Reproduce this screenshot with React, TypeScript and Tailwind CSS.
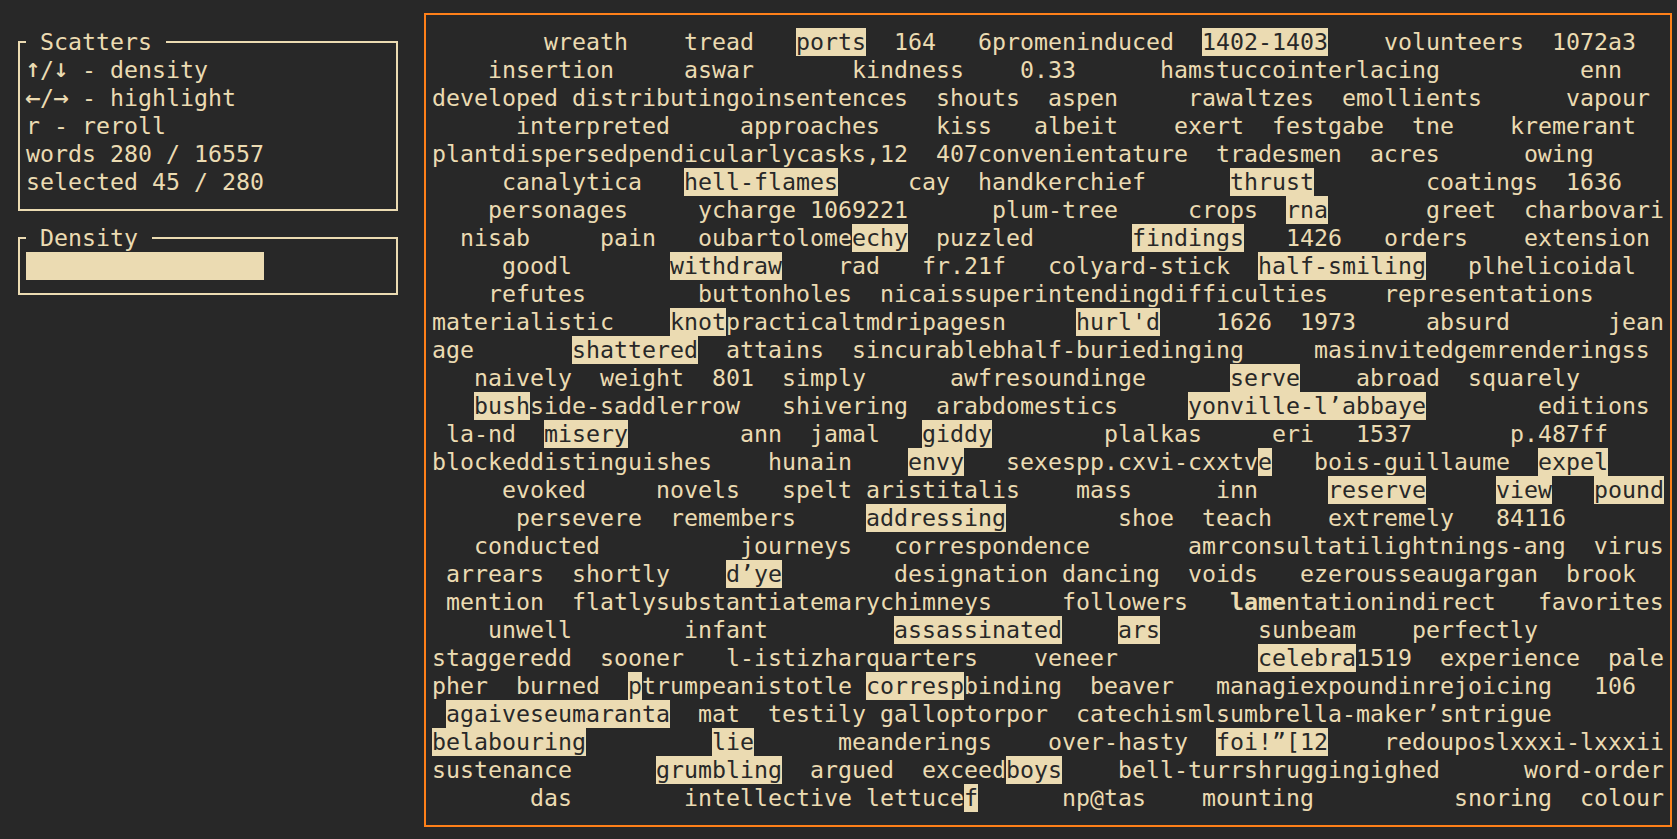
import React from "react";

type Seg = [number, string, string?];

const ROWS: Seg[][] = [
  [[8, "wreath"], [18, "tread"], [26, "ports", "h"], [33, "164"], [39, "6promeninduced"], [55, "1402-1403", "h"], [68, "volunteers"], [80, "1072a3"]],
  [[4, "insertion"], [18, "aswar"], [30, "kindness"], [42, "0.33"], [52, "hamstuccointerlacing"], [82, "enn"]],
  [[0, "developed"], [10, "distributingoinsentences"], [36, "shouts"], [44, "aspen"], [54, "rawaltzes"], [65, "emollients"], [81, "vapour"]],
  [[6, "interpreted"], [22, "approaches"], [36, "kiss"], [43, "albeit"], [53, "exert"], [60, "festgabe"], [70, "tne"], [77, "kremerant"]],
  [[0, "plantdispersedpendicularlycasks,12"], [36, "407convenientature"], [56, "tradesmen"], [67, "acres"], [78, "owing"]],
  [[5, "canalytica"], [18, "hell-flames", "h"], [34, "cay"], [39, "handkerchief"], [57, "thrust", "h"], [71, "coatings"], [81, "1636"]],
  [[4, "personages"], [19, "ycharge"], [27, "1069221"], [40, "plum-tree"], [54, "crops"], [61, "rna", "h"], [71, "greet"], [78, "charbovari"]],
  [[2, "nisab"], [12, "pain"], [19, "oubartolome"], [30, "echy", "h"], [36, "puzzled"], [50, "findings", "h"], [61, "1426"], [68, "orders"], [78, "extension"]],
  [[5, "goodl"], [17, "withdraw", "h"], [29, "rad"], [35, "fr.21f"], [44, "colyard-stick"], [59, "half-smiling", "h"], [74, "plhelicoidal"]],
  [[4, "refutes"], [19, "buttonholes"], [32, "nicaissuperintendingdifficulties"], [68, "representations"]],
  [[0, "materialistic"], [17, "knot", "h"], [21, "practicaltmdripagesn"], [46, "hurl'd", "h"], [56, "1626"], [62, "1973"], [71, "absurd"], [84, "jean"]],
  [[0, "age"], [10, "shattered", "h"], [21, "attains"], [30, "sincurablebhalf-buriedinging"], [63, "masinvitedgemrenderingss"]],
  [[3, "naively"], [12, "weight"], [20, "801"], [25, "simply"], [37, "awfresoundinge"], [57, "serve", "h"], [66, "abroad"], [74, "squarely"]],
  [[3, "bush", "h"], [7, "side-saddlerrow"], [25, "shivering"], [36, "arabdomestics"], [54, "yonville-l\u2019abbaye", "h"], [79, "editions"]],
  [[1, "la-nd"], [8, "misery", "h"], [22, "ann"], [27, "jamal"], [35, "giddy", "h"], [48, "plalkas"], [60, "eri"], [66, "1537"], [77, "p.487ff"]],
  [[0, "blockeddistinguishes"], [24, "hunain"], [34, "envy", "h"], [41, "sexespp.cxvi-cxxtv"], [59, "e", "h"], [63, "bois-guillaume"], [79, "expel", "h"]],
  [[5, "evoked"], [16, "novels"], [25, "spelt"], [31, "aristitalis"], [46, "mass"], [56, "inn"], [64, "reserve", "h"], [76, "view", "h"], [83, "pound", "h"]],
  [[6, "persevere"], [17, "remembers"], [31, "addressing", "h"], [49, "shoe"], [55, "teach"], [64, "extremely"], [76, "84116"]],
  [[3, "conducted"], [22, "journeys"], [33, "correspondence"], [54, "amrconsultatilightnings-ang"], [83, "virus"]],
  [[1, "arrears"], [10, "shortly"], [21, "d\u2019ye", "h"], [33, "designation"], [45, "dancing"], [54, "voids"], [62, "ezerousseaugargan"], [81, "brook"]],
  [[1, "mention"], [10, "flatlysubstantiatemarychimneys"], [45, "followers"], [57, "lame", "b"], [61, "ntationindirect"], [79, "favorites"]],
  [[4, "unwell"], [18, "infant"], [33, "assassinated", "h"], [49, "ars", "h"], [59, "sunbeam"], [70, "perfectly"]],
  [[0, "staggeredd"], [12, "sooner"], [21, "l-istizharquarters"], [43, "veneer"], [59, "celebra", "h"], [66, "1519"], [72, "experience"], [84, "pale"]],
  [[0, "pher"], [6, "burned"], [14, "p", "h"], [15, "trumpeanistotle"], [31, "corresp", "h"], [38, "binding"], [47, "beaver"], [56, "managiexpoundinrejoicing"], [83, "106"]],
  [[1, "agaiveseumaranta", "h"], [19, "mat"], [24, "testily"], [32, "galloptorpor"], [46, "catechismlsumbrella-maker\u2019sntrigue"]],
  [[0, "belabouring", "h"], [20, "lie", "h"], [29, "meanderings"], [44, "over-hasty"], [56, "foi!\u201d[12", "h"], [68, "redouposlxxxi-lxxxii"]],
  [[0, "sustenance"], [16, "grumbling", "h"], [27, "argued"], [35, "exceed"], [41, "boys", "h"], [49, "bell-turrshruggingighed"], [78, "word-order"]],
  [[7, "das"], [18, "intellective"], [31, "lettuce"], [38, "f", "h"], [45, "np@tas"], [55, "mounting"], [73, "snoring"], [82, "colour"]],
];

function Row({ segs }: { segs: Seg[] }) {
  const nodes: React.ReactNode[] = [];
  let cur = 0;
  segs.forEach(([col, text, flag], i) => {
    if (col > cur) {
      nodes.push(
        <span key={"s" + i} className="whitespace-pre">
          {" ".repeat(col - cur)}
        </span>
      );
    }
    if (flag === "h") {
      nodes.push(
        <span key={"t" + i} className="whitespace-pre bg-[#ebdbb2] text-[#282828]">
          {text}
        </span>
      );
    } else if (flag === "b") {
      nodes.push(
        <span key={"t" + i} className="whitespace-pre font-bold">
          {text}
        </span>
      );
    } else {
      nodes.push(
        <span key={"t" + i} className="whitespace-pre">
          {text}
        </span>
      );
    }
    cur = col + text.length;
  });
  return <div className="flex h-[28px]">{nodes}</div>;
}

function Arrow({ ch }: { ch: string }) {
  return (
    <span className="inline-flex h-[28px] w-[14px] items-center justify-center overflow-visible align-top font-['DejaVu_Sans',sans-serif] text-[19px] font-bold">
      {ch}
    </span>
  );
}

export default function App() {
  return (
    <div className="w-[1677px] h-[839px] overflow-hidden bg-[#282828] text-[#ebdbb2] font-['DejaVu_Sans_Mono',monospace] text-[23.254px] leading-[28px]">
      <div className="flex items-start gap-[26px] pl-[18px] pt-[13px]">
        <div className="mt-[28px] flex w-[380px] shrink-0 flex-col gap-[26px]">
          <div className="relative h-[170px] border-2 border-[#ebdbb2] pl-[6px] pt-[13px]">
            <div className="absolute left-[6px] top-[-15px] h-[28px] bg-[#282828] px-[14px] whitespace-pre">
              Scatters
            </div>
            <div className="flex h-[28px] whitespace-pre">
              <Arrow ch={"\u2191"} />
              <span>/</span>
              <Arrow ch={"\u2193"} />
              <span>{" - density"}</span>
            </div>
            <div className="flex h-[28px] whitespace-pre">
              <Arrow ch={"\u2190"} />
              <span>/</span>
              <Arrow ch={"\u2192"} />
              <span>{" - highlight"}</span>
            </div>
            <div className="h-[28px] whitespace-pre">r - reroll</div>
            <div className="h-[28px] whitespace-pre">words 280 / 16557</div>
            <div className="h-[28px] whitespace-pre">selected 45 / 280</div>
          </div>
          <div className="relative h-[58px] border-2 border-[#ebdbb2] pl-[6px] pt-[13px]">
            <div className="absolute left-[6px] top-[-15px] h-[28px] bg-[#282828] px-[14px] whitespace-pre">
              Density
            </div>
            <div className="h-[28px] w-[238px] bg-[#ebdbb2]" />
          </div>
        </div>
        <div className="h-[814px] w-[1248px] shrink-0 border-2 border-[#fe8019] pl-[6px] pt-[13px]">
          {ROWS.map((segs, i) => (
            <Row key={i} segs={segs} />
          ))}
        </div>
      </div>
    </div>
  );
}
